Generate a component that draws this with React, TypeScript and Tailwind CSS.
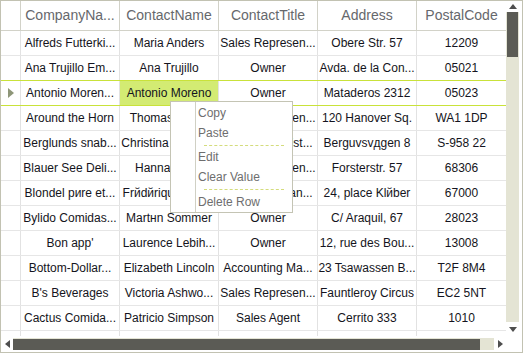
import React from "react";

const rows: string[][] = [
  ["Alfreds  Futterki...", "Maria Anders", "Sales  Represen...", "Obere Str. 57", "12209"],
  ["Ana Trujillo Em...", "Ana Trujillo", "Owner", "Avda. de la Con...", "05021"],
  ["Antonio  Moren...", "Antonio Moreno", "Owner", "Mataderos  2312", "05023"],
  ["Around the Horn", "Thomas Hardy", "Sales Represen...", "120 Hanover Sq.", "WA1 1DP"],
  ["Berglunds  snab...", "Christina Berglu...", "Order Administ...", "Berguvsvдgen 8", "S-958 22"],
  ["Blauer See Deli...", "Hanna Moos", "Sales Represen...", "Forsterstr. 57", "68306"],
  ["Blondel  pиre  et...", "Frйdйrique Cite...", "Marketing Man...", "24, place Klйber", "67000"],
  ["Bуlido  Comidas...", "Martнn Sommer", "Owner", "C/ Araquil, 67", "28023"],
  ["Bon app'", "Laurence  Lebih...", "Owner", "12, rue des Bou...", "13008"],
  ["Bottom-Dollar...", "Elizabeth Lincoln", "Accounting Ma...", "23  Tsawassen  B...", "T2F 8M4"],
  ["B's Beverages", "Victoria  Ashwo...", "Sales  Represen...", "Fauntleroy Circus", "EC2 5NT"],
  ["Cactus  Comida...", "Patricio Simpson", "Sales Agent", "Cerrito 333", "1010"],
];

const headers = ["CompanyNa...", "ContactName", "ContactTitle", "Address", "PostalCode"];
const widths = ["w-[99px]", "w-[99px]", "w-[99px]", "w-[99px]", "w-[89px]"];

export default function App() {
  return (
    <div
      className="relative w-[523px] h-[353px] bg-white border border-[#c2c2b2] flex flex-col overflow-hidden"
      style={{ fontFamily: '"Liberation Sans", Arial, sans-serif' }}
    >
      <div className="flex h-[335px]">
        {/* table */}
        <div className="w-[505px] flex flex-col overflow-hidden">
          {/* header */}
          <div className="flex h-[30px] shrink-0 border-b border-[#d2d2c8]">
            <div className="w-[20px] shrink-0 border-r border-[#d2d2c8]" />
            {headers.map((h, i) => (
              <div
                key={h}
                className={`${widths[i]} shrink-0 ${i < 4 ? "border-r border-[#d2d2c8]" : ""} flex items-center justify-center text-[14px] text-[#66686c] whitespace-nowrap overflow-hidden`}
              >
                {h}
              </div>
            ))}
          </div>
          {rows.map((r, ri) => (
            <div
              key={ri}
              className={`flex h-[25px] shrink-0 border-b ${ri === 1 || ri === 2 ? "border-[#c9e23a]" : "border-[#e6e6e6]"}`}
            >
              <div className="w-[20px] shrink-0 border-r border-[#e2e2e2] flex items-center pl-[7px]">
                {ri === 2 && (
                  <svg width="6" height="10" viewBox="0 0 6 10">
                    <polygon points="0,0 6,5 0,10" fill="#8e9678" />
                  </svg>
                )}
              </div>
              {r.map((t, ci) => {
                const current = ri === 2 && ci === 1;
                return (
                  <div
                    key={ci}
                    className={`relative ${widths[ci]} shrink-0 ${ci < 4 ? "border-r border-[#e2e2e2]" : ""} ${current ? "bg-[#d3eb73]" : ""} flex items-center justify-center text-[12px] text-[#141420] whitespace-nowrap overflow-hidden`}
                  >
                    {current && (
                      <div className="absolute left-[-1px] top-[-1px] right-[-1px] bottom-[-1px] border border-[#a3bc3e]" />
                    )}
                    <span className="relative">{t}</span>
                  </div>
                );
              })}
            </div>
          ))}
          {/* partial row */}
          <div className="flex h-[5px] shrink-0">
            <div className="w-[20px] shrink-0 border-r border-[#e2e2e2]" />
            {widths.map((w, i) => (
              <div key={i} className={`${w} shrink-0 ${i < 4 ? "border-r border-[#e2e2e2]" : ""}`} />
            ))}
          </div>
        </div>
        {/* vertical scrollbar */}
        <div className="w-[16px] shrink-0 flex flex-col pr-[3px]">
          <div className="h-[11px] flex items-center justify-center">
            <svg width="8" height="5" viewBox="0 0 8 5">
              <polygon points="0,5 4,0 8,5" fill="#4e4e4e" />
            </svg>
          </div>
          <div className="flex-1 bg-[#e4e4d4] flex flex-col px-[1px]">
            <div className="h-[45px] bg-[#5b5b55]" />
          </div>
          <div className="h-[14px] flex items-center justify-center">
            <svg width="8" height="5" viewBox="0 0 8 5">
              <polygon points="0,0 8,0 4,5" fill="#4e4e4e" />
            </svg>
          </div>
        </div>
      </div>
      {/* horizontal scrollbar */}
      <div className="flex h-[16px] items-center">
        <div className="w-[12px] flex items-center justify-center pl-[1px]">
          <svg width="5" height="8" viewBox="0 0 5 8">
            <polygon points="5,0 0,4 5,8" fill="#4e4e4e" />
          </svg>
        </div>
        <div className="w-[481px] h-[12px] bg-[#e4e4d4] flex items-center">
          <div className="w-[467px] h-[11px] bg-[#5b5b55]" />
        </div>
        <div className="w-[12px] flex items-center justify-center">
          <svg width="5" height="8" viewBox="0 0 5 8">
            <polygon points="0,0 5,4 0,8" fill="#4e4e4e" />
          </svg>
        </div>
      </div>

      {/* context menu */}
      <div className="absolute left-[169px] top-[100px] w-[123px] h-[112px] bg-white border border-[#c4c4b4] flex text-[12px] text-[#6e6e6e]">
        <div className="w-[25px] shrink-0 border-r border-[#d0d0c4]" />
        <div className="flex-1 flex flex-col pt-[1px]">
          <div className="h-[20px] flex items-center pl-[2px]">Copy</div>
          <div className="h-[20px] flex items-center pl-[2px]">Paste</div>
          <div className="h-[5px] flex items-center pl-[8px] pr-[8px]">
            <div className="w-full border-t border-dashed border-[#d4dc7c]" />
          </div>
          <div className="h-[20px] flex items-center pl-[2px]">Edit</div>
          <div className="h-[20px] flex items-center pl-[2px]">Clear Value</div>
          <div className="h-[5px] flex items-center pl-[8px] pr-[8px]">
            <div className="w-full border-t border-dashed border-[#d4dc7c]" />
          </div>
          <div className="h-[20px] flex items-center pl-[2px]">Delete Row</div>
        </div>
      </div>
    </div>
  );
}
